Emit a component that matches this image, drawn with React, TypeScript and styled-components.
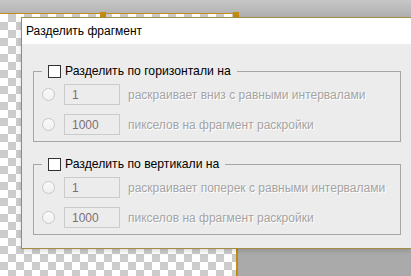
import React from 'react';
import styled, {createGlobalStyle} from 'styled-components';

const GlobalStyle = createGlobalStyle`
  html, body {
    margin: 0;
    padding: 0;
  }
  body {
    background: #aaaaaa;
    font-family: "Liberation Sans", Arial, sans-serif;
  }
`;

const gold = '#c28b12';

const Screen = styled.div`
  position: relative;
  width: 411px;
  height: 276px;
  overflow: hidden;
  display: flex;
  flex-direction: column;
  background: #aaaaaa;
`;

const TopBar = styled.div`
  flex: none;
  height: 13px;
  background: linear-gradient(#c7c7c7, #b5b5b5);
`;

const Workspace = styled.div`
  flex: 1;
  display: flex;
  background: linear-gradient(#b3b3b3 0, #b3b3b3 4px, #aaaaaa 4px);
`;

const Canvas = styled.div`
  position: relative;
  flex: none;
  width: 238px;
  box-sizing: border-box;
  border-top: 1px solid ${gold};
  border-right: 2px solid ${gold};
  background-color: #ffffff;
  background-image:
    linear-gradient(45deg, #cccccc 25%, transparent 25%, transparent 75%, #cccccc 75%),
    linear-gradient(45deg, #cccccc 25%, transparent 25%, transparent 75%, #cccccc 75%);
  background-size: 16px 16px;
  background-position: 0 0, 8px 8px;
`;

const Handle = styled.span<{$left: number}>`
  position: absolute;
  top: -2px;
  left: ${p => p.$left}px;
  width: 6px;
  height: 5px;
  background: ${gold};
`;

const Dialog = styled.div`
  position: absolute;
  left: 21px;
  top: 17px;
  width: 390px;
  height: 232px;
  box-sizing: border-box;
  border: 1px solid #a38c44;
  border-right: none;
  background: #ececec;
  display: flex;
  flex-direction: column;
  box-shadow: 0 2px 5px rgba(0, 0, 0, 0.15);
`;

const Title = styled.div`
  height: 26px;
  line-height: 26px;
  padding-left: 4px;
  background: #ffffff;
  color: #000;
  font-size: 12px;
`;

const Body = styled.div`
  display: flex;
  flex-direction: column;
  gap: 14px;
  padding: 19px 10px 0 11px;
`;

const Group = styled.fieldset`
  margin: 0;
  min-width: 0;
  padding: 5px 8px 6px 8px;
  border: 1px solid #a6a6a6;
  display: flex;
  flex-direction: column;
  gap: 9px;
`;

const Legend = styled.legend`
  display: flex;
  align-items: center;
  gap: 4px;
  height: 16px;
  padding: 0 6px;
  font-size: 12.2px;
  line-height: 16px;
  color: #000;
`;

const Check = styled.input`
  appearance: none;
  margin: 0;
  width: 13px;
  height: 13px;
  box-sizing: border-box;
  border: 1px solid #333;
  background: #fff;
`;

const Row = styled.div`
  display: flex;
  align-items: center;
  height: 21px;
`;

const Radio = styled.input`
  appearance: none;
  margin: 0;
  width: 13px;
  height: 13px;
  box-sizing: border-box;
  border-radius: 50%;
  border: 1px solid #c8c8c8;
  background: linear-gradient(#fafafa, #f0f0f0);
`;

const NumberBox = styled.input`
  margin: 0 0 0 9px;
  width: 56px;
  height: 21px;
  box-sizing: border-box;
  padding: 0 0 0 7px;
  border: 1px solid #cbcbcb;
  background: #ececec;
  font-family: inherit;
  font-size: 12px;
  color: #7d6e74;
  -webkit-text-fill-color: #7d6e74;
  outline: none;
`;

const Hint = styled.span`
  margin-left: 8px;
  font-size: 12px;
  color: #a4a4a4;
  text-shadow: 1px 1px 0 #ffffff;
  white-space: nowrap;
`;

type SplitGroupProps = {
  title: string;
  countText: string;
};

const SplitGroup: React.FC<SplitGroupProps> = ({title, countText}) => (
  <Group>
    <Legend>
      <Check type="checkbox" />
      <span>{title}</span>
    </Legend>
    <Row>
      <Radio type="radio" disabled />
      <NumberBox disabled value="1" readOnly />
      <Hint>{countText}</Hint>
    </Row>
    <Row>
      <Radio type="radio" disabled />
      <NumberBox disabled value="1000" readOnly />
      <Hint>пикселов на фрагмент раскройки</Hint>
    </Row>
  </Group>
);

export default function App() {
  return (
    <Screen>
      <GlobalStyle />
      <TopBar />
      <Workspace>
        <Canvas>
          <Handle $left={100} />
          <Handle $left={233} />
        </Canvas>
      </Workspace>
      <Dialog>
        <Title>Разделить фрагмент</Title>
        <Body>
          <SplitGroup
            title="Разделить по горизонтали на"
            countText="раскраивает вниз с равными интервалами"
          />
          <SplitGroup
            title="Разделить по вертикали на"
            countText="раскраивает поперек с равными интервалами"
          />
        </Body>
      </Dialog>
    </Screen>
  );
}
